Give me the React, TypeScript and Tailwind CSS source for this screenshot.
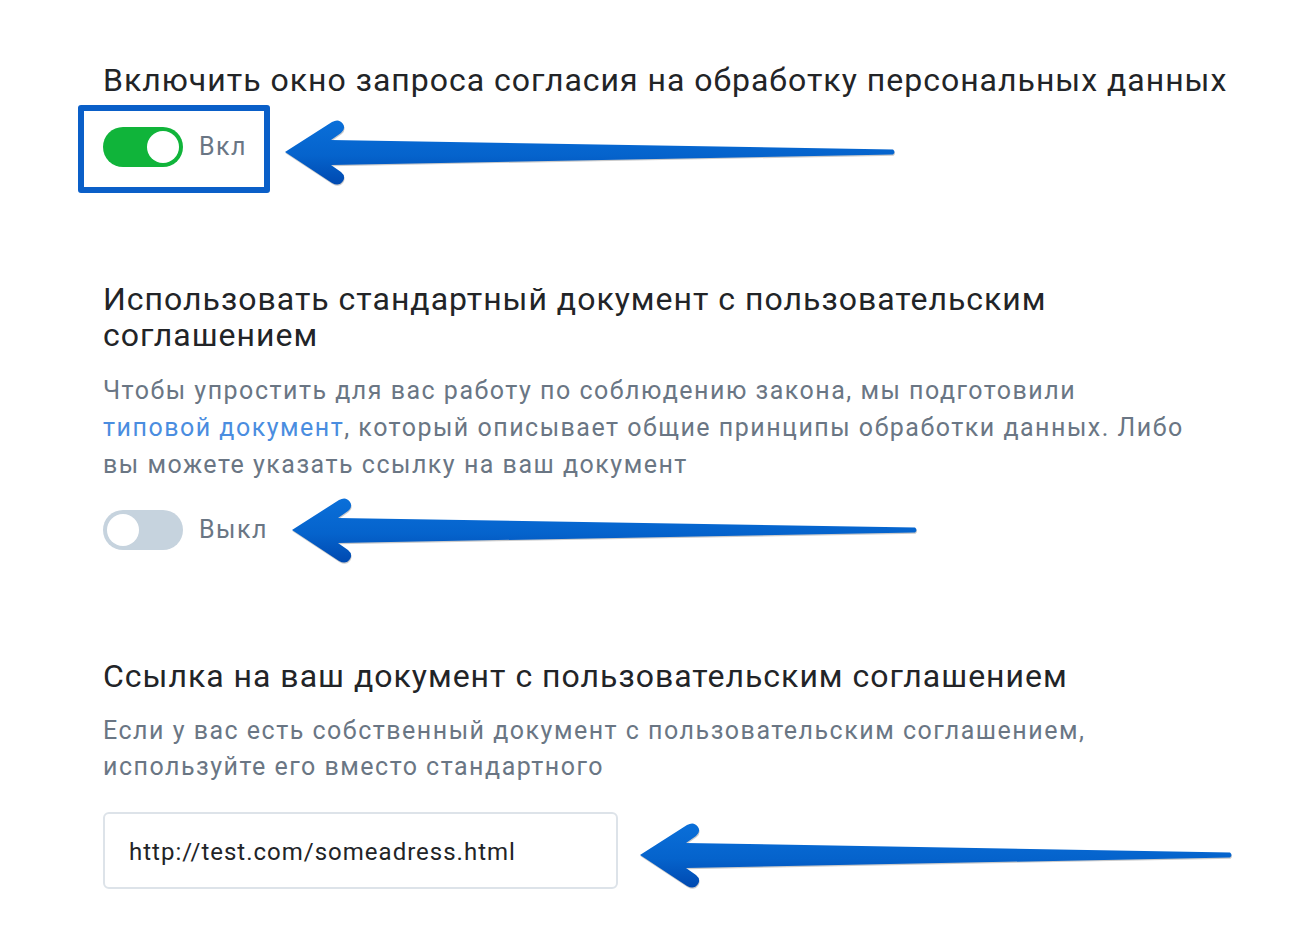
import React from "react";

function Arrow({ length, className }: { length: number; className: string }) {
  const L = length;
  const id = `g${L}`;
  const d = `M0 0 L47 -30 Q54 -34 58 -28 Q61 -23 56 -19 L46 -12 L${L} -2.5 Q${L + 3} 0 ${L} 2.5 L46 13 L56 20 Q61 24 58 29 Q54 35 47 31 Z`;
  return (
    <svg
      className={className}
      width={L + 10}
      height={76}
      viewBox={`-4 -38 ${L + 10} 76`}
    >
      <defs>
        <linearGradient id={id} x1="0" y1="0" x2="0" y2="1">
          <stop offset="0" stopColor="#0a6fd9" />
          <stop offset="0.55" stopColor="#0563cc" />
          <stop offset="1" stopColor="#0049b0" />
        </linearGradient>
      </defs>
      <path d={d} fill="#6b6b6b" opacity="0.35" transform="translate(0.5 1.2)" />
      <path d={d} fill={`url(#${id})`} />
    </svg>
  );
}

function Toggle({ on }: { on: boolean }) {
  return (
    <div
      className={
        on
          ? "flex h-[40px] w-[80px] items-center justify-end rounded-full bg-[#10b43a] px-[4px]"
          : "flex h-[40px] w-[80px] items-center justify-start rounded-full bg-[#c6d3de] px-[4px]"
      }
    >
      <div className="h-[32px] w-[32px] rounded-full bg-white" />
    </div>
  );
}

export default function App() {
  return (
    <div
      className="relative min-h-[950px] w-[1302px] bg-white pl-[103px] pt-[62px] text-[#222427]"
      style={{ fontFamily: "Roboto, 'Noto Sans', sans-serif" }}
    >
      <h2 className="text-[32px] leading-[36px] font-normal tracking-[1px] whitespace-nowrap">
        Включить окно запроса согласия на обработку персональных данных
      </h2>

      <div className="relative mt-[29px] flex items-center gap-[16px]">
        <div className="absolute left-[-25px] top-[-22px] h-[88px] w-[192px] rounded-[3px] border-[6px] border-[#0a5fc8]" />
        <Toggle on={true} />
        <span className="text-[25px] leading-[40px] tracking-[1.5px] text-[#6a7684]">Вкл</span>
        <Arrow length={608} className="absolute left-[178px] top-[-13px]" />
      </div>

      <h2 className="mt-[114px] w-[1120px] text-[32px] leading-[36px] font-normal tracking-[1px]">
        Использовать стандартный документ с пользовательским
        <br />
        соглашением
      </h2>
      <p className="mt-[19px] w-[1160px] whitespace-nowrap text-[25px] leading-[37px] tracking-[1.5px] text-[#6a7684]">
        Чтобы упростить для вас работу по соблюдению закона, мы подготовили
        <br />
        <span className="text-[#4a8de0]">типовой документ</span>, который описывает общие
        принципы обработки данных. Либо
        <br />
        вы можете указать ссылку на ваш документ
      </p>

      <div className="relative mt-[27px] flex items-center gap-[16px]">
        <Toggle on={false} />
        <span className="text-[25px] leading-[40px] tracking-[1.5px] text-[#6a7684]">Выкл</span>
        <Arrow length={623} className="absolute left-[185px] top-[-18px]" />
      </div>

      <h2 className="mt-[108px] text-[32px] leading-[36px] font-normal tracking-[1px] whitespace-nowrap">
        Ссылка на ваш документ с пользовательским соглашением
      </h2>
      <p className="mt-[19px] w-[1100px] whitespace-nowrap text-[25px] leading-[36px] tracking-[1.5px] text-[#6a7684]">
        Если у вас есть собственный документ с пользовательским соглашением,
        <br />
        используйте его вместо стандартного
      </p>

      <div className="relative mt-[27px] flex items-center">
        <div className="flex h-[77px] w-[515px] items-center rounded-[6px] border-[2px] border-[#dde3e9] px-[24px] pt-[3px] text-[24px] tracking-[1px] text-[#222427]">
          http://test.com/someadress.html
        </div>
        <Arrow length={590} className="absolute left-[533px] top-[5px]" />
      </div>
    </div>
  );
}
